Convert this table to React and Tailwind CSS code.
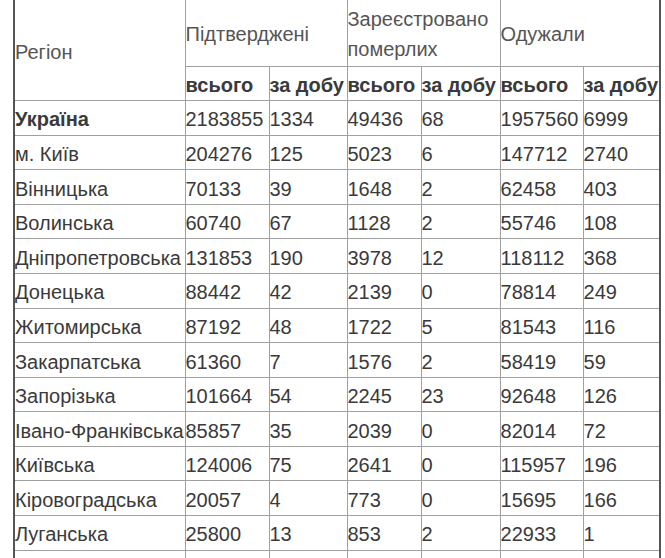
const rows = [
  ['Україна', '2183855', '1334', '49436', '68', '1957560', '6999'],
  ['м. Київ', '204276', '125', '5023', '6', '147712', '2740'],
  ['Вінницька', '70133', '39', '1648', '2', '62458', '403'],
  ['Волинська', '60740', '67', '1128', '2', '55746', '108'],
  ['Дніпропетровська', '131853', '190', '3978', '12', '118112', '368'],
  ['Донецька', '88442', '42', '2139', '0', '78814', '249'],
  ['Житомирська', '87192', '48', '1722', '5', '81543', '116'],
  ['Закарпатська', '61360', '7', '1576', '2', '58419', '59'],
  ['Запорізька', '101664', '54', '2245', '23', '92648', '126'],
  ['Івано-Франківська', '85857', '35', '2039', '0', '82014', '72'],
  ['Київська', '124006', '75', '2641', '0', '115957', '196'],
  ['Кіровоградська', '20057', '4', '773', '0', '15695', '166'],
  ['Луганська', '25800', '13', '853', '2', '22933', '1'],
  ['\u00a0', '', '', '', '', '', ''],
];

// borders grey inside, darker on the outer left/right edge
const cell = 'border border-[#a0a0a0] pl-0 pr-0 pt-[3.4px] pb-[0.2px] align-middle whitespace-nowrap overflow-hidden';

function App() {
  return (
    <div className="min-h-screen bg-white pl-[13px] pr-[6px] overflow-hidden">
      <table
        className="table-fixed border-collapse border-l-2 border-r-2 border-l-[#555] border-r-[#555] text-[20px] leading-[30px] text-[#3a3a3a] w-[646px]"
        style={{ fontFamily: '"Liberation Sans", Arial, sans-serif' }}
      >
        <colgroup>
          <col className="w-[171px]" />
          <col className="w-[84px]" />
          <col className="w-[78px]" />
          <col className="w-[74px]" />
          <col className="w-[79px]" />
          <col className="w-[83px]" />
          <col className="w-[77px]" />
        </colgroup>
        <thead>
          <tr className="h-[66px]">
            <th rowSpan={2} className={`${cell} border-t-0 border-l-[#555] font-normal text-left text-[#555]`}>
              Регіон
            </th>
            <th colSpan={2} className={`${cell} border-t-0 font-normal text-left text-[#555]`}>
              Підтверджені
            </th>
            <th colSpan={2} className={`${cell} border-t-0 font-normal text-left text-[#555] whitespace-normal`}>
              Зареєстровано
              <br />
              померлих
            </th>
            <th colSpan={2} className={`${cell} border-t-0 border-r-[#555] font-normal text-left text-[#555]`}>
              Одужали
            </th>
          </tr>
          <tr>
            <th className={`${cell} font-bold text-left`}>всього</th>
            <th className={`${cell} font-bold text-left`}>за добу</th>
            <th className={`${cell} font-bold text-left`}>всього</th>
            <th className={`${cell} font-bold text-left`}>за добу</th>
            <th className={`${cell} font-bold text-left`}>всього</th>
            <th className={`${cell} font-bold text-left border-r-[#555]`}>за добу</th>
          </tr>
        </thead>
        <tbody>
          {rows.map((r, i) => (
            <tr key={i}>
              {r.map((v, j) => (
                <td
                  key={j}
                  className={`${cell} ${j === 0 ? 'border-l-[#555]' : ''} ${j === 6 ? 'border-r-[#555]' : ''} ${i === 0 && j === 0 ? 'font-bold' : ''}`}
                >
                  {v || '\u00a0'}
                </td>
              ))}
            </tr>
          ))}
        </tbody>
      </table>
    </div>
  );
}

export default App;
